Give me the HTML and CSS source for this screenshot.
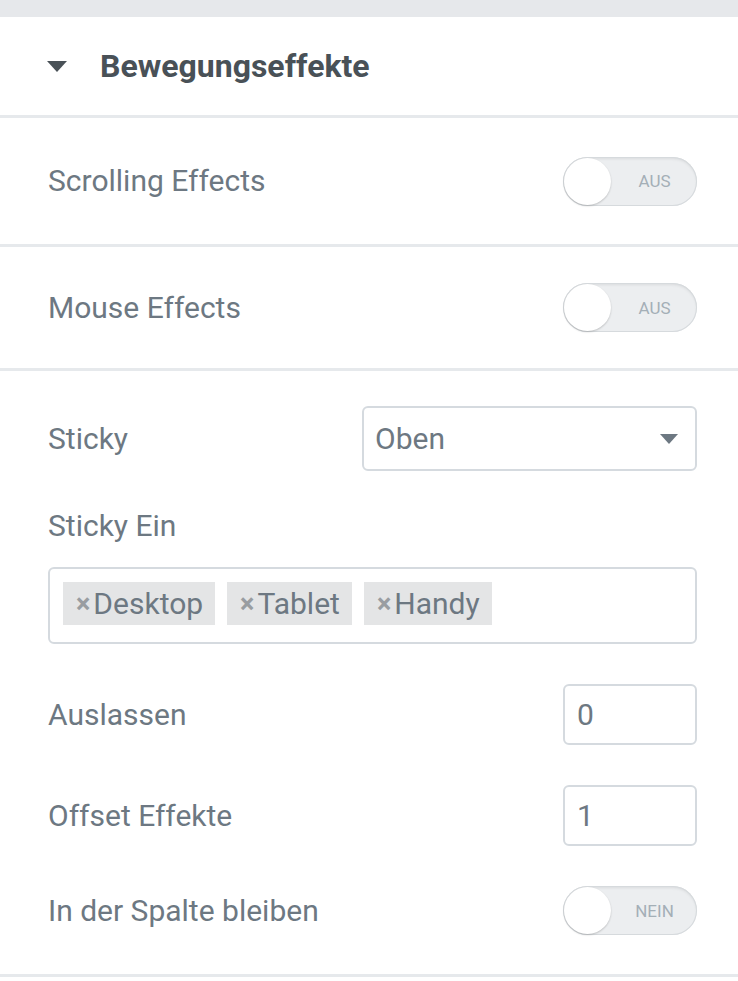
FILE: index.html
```html
<!DOCTYPE html>
<html lang="de">
<head>
    <meta charset="UTF-8">
    <meta name="viewport" content="width=device-width, initial-scale=1.0">
    <title>Bewegungseffekte</title>
    <link rel="stylesheet" href="styles.css">
</head>
<body>

    <div class="panel-top"></div>

    <!-- section head -->
    <div class="section-head">
        <span class="caret"></span>
        <h2>Bewegungseffekte</h2>
    </div>

    <div class="row row-first">
        <span class="label">Scrolling Effects</span>
        <label class="switch"><span class="knob"></span><span class="switch-text">AUS</span></label>
    </div>

    <div class="row row-second">
        <span class="label">Mouse Effects</span>
        <label class="switch"><span class="knob"></span><span class="switch-text">AUS</span></label>
    </div>

    <!-- sticky options -->
    <div class="group">
        <div class="control">
            <span class="label">Sticky</span>
            <div class="select">
                <span>Oben</span>
                <span class="select-caret"></span>
            </div>
        </div>

        <div class="control-block">
            <span class="label">Sticky Ein</span>
            <div class="tags">
                <span class="tag"><b>×</b>Desktop</span>
                <span class="tag"><b>×</b>Tablet</span>
                <span class="tag"><b>×</b>Handy</span>
            </div>
        </div>

        <div class="control">
            <span class="label">Auslassen</span>
            <div class="number">0</div>
        </div>

        <div class="control">
            <span class="label">Offset Effekte</span>
            <div class="number">1</div>
        </div>

        <div class="control">
            <span class="label">In der Spalte bleiben</span>
            <label class="switch"><span class="knob"></span><span class="switch-text">NEIN</span></label>
        </div>
    </div>

</body>
</html>
```

FILE: styles.css
```css
body {
    margin: 0;
    padding: 0;
    background: #fff;
    font-family: Roboto, "Liberation Sans", sans-serif;
    color: #6d7882;
}

.panel-top {
    height: 17px;
    background-color: #e6e8eb;
}

.section-head {
    display: flex;
    align-items: center;
    height: 98px;
    padding-left: 47px;
    border-bottom: 3px solid #e6e9ec;
}

.section-head .caret {
    width: 0;
    height: 0;
    border-left: 10px solid transparent;
    border-right: 10px solid transparent;
    border-top: 11px solid #495157;
    margin-right: 33px;
}

.section-head h2 {
    margin: 0;
    font-size: 32px;
    font-weight: 700;
    color: #495157;
}

.row {
    display: flex;
    align-items: center;
    justify-content: space-between;
    padding: 0 41px 0 48px;
    border-bottom: 3px solid #e6e9ec;
}

.row-first {
    height: 126px;
}

.row-second {
    height: 121px;
}

.label {
    font-size: 30px;
    line-height: 30px;
    color: #6d7882;
}

/* switch */
.switch {
    position: relative;
    display: flex;
    align-items: center;
    justify-content: flex-end;
    width: 134px;
    height: 49px;
    box-sizing: border-box;
    border-radius: 25px;
    background: #eceef0;
    box-shadow: inset 0 0 0 1px #d6dadd, inset 0 2px 3px rgba(0, 0, 0, 0.08);
}

.switch .knob {
    position: absolute;
    left: 1px;
    top: 1px;
    width: 47px;
    height: 47px;
    border-radius: 50%;
    background: #fff;
    box-shadow: 0 1px 2px rgba(0, 0, 0, 0.2);
}

.switch-text {
    width: 85px;
    text-align: center;
    font-size: 17px;
    color: #a4afb7;
}

/* group */
.group {
    display: flex;
    flex-direction: column;
    gap: 40px;
    padding: 35px 41px 39px 48px;
    border-bottom: 3px solid #e6e9ec;
}

.control {
    display: flex;
    align-items: center;
    justify-content: space-between;
}

.control-block .label {
    display: block;
    margin-bottom: 26px;
}

.select {
    display: flex;
    align-items: center;
    justify-content: space-between;
    width: 335px;
    height: 65px;
    box-sizing: border-box;
    padding: 0 17px 0 11px;
    border: 2px solid #d5dadf;
    border-radius: 6px;
    font-size: 30px;
    color: #6d7882;
}

.select-caret {
    width: 0;
    height: 0;
    border-left: 9px solid transparent;
    border-right: 9px solid transparent;
    border-top: 10px solid #6d7882;
}

.tags {
    display: flex;
    gap: 12px;
    height: 77px;
    box-sizing: border-box;
    padding: 13px 13px;
    border: 2px solid #d5dadf;
    border-radius: 6px;
}

.tag {
    display: flex;
    align-items: center;
    height: 43px;
    padding: 0 12px 0 13px;
    background: #e4e5e6;
    font-size: 30px;
    color: #6d7882;
}

.tag b {
    font-size: 27px;
    color: #999da1;
    margin-right: 3px;
}

.number {
    display: flex;
    align-items: center;
    width: 134px;
    height: 61px;
    box-sizing: border-box;
    padding-left: 12px;
    border: 2px solid #d5dadf;
    border-radius: 6px;
    font-size: 30px;
    color: #6d7882;
}
```
